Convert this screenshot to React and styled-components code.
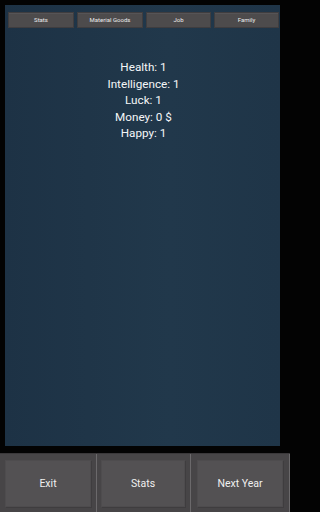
import React from "react";
import styled, { createGlobalStyle } from "styled-components";

const GlobalStyle = createGlobalStyle`
  html, body {
    margin: 0;
    padding: 0;
    background: #030303;
  }
  body {
    font-family: Roboto, "Noto Sans", sans-serif;
  }
`;

const Screen = styled.div`
  width: 290px;
  height: 512px;
  display: flex;
  flex-direction: column;
  background: #030303;
  overflow: hidden;
`;

const PanelWrap = styled.div`
  flex: 1;
  display: flex;
  padding: 5px 10px 7px 5px;
  min-height: 0;
`;

const Panel = styled.div`
  flex: 1;
  display: flex;
  flex-direction: column;
  background: linear-gradient(90deg, #1d3245 0%, #21384b 60%, #1f3548 100%);
  padding: 7px 1px 0 3px;
`;

const TabRow = styled.div`
  display: grid;
  grid-template-columns: 66px 66px 65px 65px;
  gap: 3px;
  height: 16px;
`;

const Tab = styled.button`
  margin: 0;
  padding: 0;
  border: 1px solid #3f3d3f;
  background: #4d4b4c;
  color: #ececec;
  font-family: Roboto, "Noto Sans", sans-serif;
  font-size: 6px;
  line-height: 14px;
  text-align: center;
  box-shadow: inset 0 1px 0 #565456;
`;

const StatList = styled.div`
  margin-top: 31px;
  display: flex;
  flex-direction: column;
  align-items: center;
`;

const StatLine = styled.div`
  color: #f4f6f8;
  font-size: 11.7px;
  line-height: 16.5px;
`;

const BottomBar = styled.div`
  height: 59px;
  display: grid;
  grid-template-columns: 97px 94px 99px;
  background: #474547;
  border-top: 1px solid #3a383a;
  box-sizing: border-box;
`;

const Cell = styled.div`
  display: flex;
  padding: ${(p) => p.$pad};
  border-right: 1px solid #6b696b;
  box-sizing: border-box;
`;

const ActionButton = styled.button`
  flex: 1;
  margin: 0;
  border: none;
  background: #535153;
  color: #f0f0f0;
  font-family: Roboto, "Noto Sans", sans-serif;
  font-size: 10.5px;
  box-shadow: inset 0 0 0 1px #4e4c4e, 1px 1px 0 #3f3d3f;
`;

const tabs = ["Stats", "Material Goods", "Job", "Family"];
const stats = [
  ["Health", "1"],
  ["Intelligence", "1"],
  ["Luck", "1"],
  ["Money", "0 $"],
  ["Happy", "1"],
];
const actions = [
  { label: "Exit", pad: "6px 5px 5px 5px" },
  { label: "Stats", pad: "6px 5px 5px 4px" },
  { label: "Next Year", pad: "6px 6px 5px 6px" },
];

export default function App() {
  return (
    <>
      <GlobalStyle />
      <Screen>
        <PanelWrap>
          <Panel>
            <TabRow>
              {tabs.map((t) => (
                <Tab key={t}>{t}</Tab>
              ))}
            </TabRow>
            <StatList>
              {stats.map(([k, v]) => (
                <StatLine key={k}>
                  {k}: {v}
                </StatLine>
              ))}
            </StatList>
          </Panel>
        </PanelWrap>
        <BottomBar>
          {actions.map((a) => (
            <Cell key={a.label} $pad={a.pad}>
              <ActionButton>{a.label}</ActionButton>
            </Cell>
          ))}
        </BottomBar>
      </Screen>
    </>
  );
}
